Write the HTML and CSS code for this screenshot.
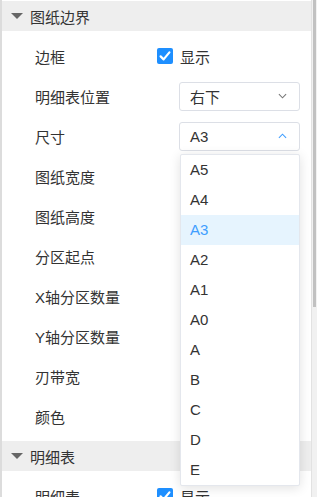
FILE: index.html
```html
<!DOCTYPE html>
<html lang="zh-CN">
<head>
  <meta charset="UTF-8" />
  <meta name="viewport" content="width=device-width, initial-scale=1.0"/>
  <title>图纸设置</title>
  <link rel="stylesheet" href="styles.css">
</head>
<body>
  <div class="page">
    <div class="panel">

      <!-- 图纸边界 -->
      <div class="section-head"><span class="caret"></span>图纸边界</div>
      <div class="section-body">
        <div class="row">
          <span class="label">边框</span>
          <label class="check"><span class="box"><svg viewBox="0 0 16 16" width="16" height="16"><path d="M3.6 8.4 L6.6 11.4 L12.4 4.4" fill="none" stroke="#fff" stroke-width="2.2" stroke-linecap="round" stroke-linejoin="round"/></svg></span>显示</label>
        </div>
        <div class="row">
          <span class="label">明细表位置</span>
          <div class="select">
            <span>右下</span>
            <svg class="arrow" viewBox="0 0 10 6" width="9" height="6"><path d="M1 1 L5 5 L9 1" fill="none" stroke="#777" stroke-width="1.2"/></svg>
          </div>
        </div>
        <div class="row">
          <span class="label">尺寸</span>
          <div class="select open">
            <span>A3</span>
            <svg class="arrow" viewBox="0 0 10 6" width="9" height="6"><path d="M1 5 L5 1 L9 5" fill="none" stroke="#409eff" stroke-width="1.2"/></svg>
            <ul class="dropdown">
              <li>A5</li>
              <li>A4</li>
              <li class="selected">A3</li>
              <li>A2</li>
              <li>A1</li>
              <li>A0</li>
              <li>A</li>
              <li>B</li>
              <li>C</li>
              <li>D</li>
              <li>E</li>
            </ul>
          </div>
        </div>
        <div class="row"><span class="label">图纸宽度</span></div>
        <div class="row"><span class="label">图纸高度</span></div>
        <div class="row"><span class="label">分区起点</span></div>
        <div class="row"><span class="label">X轴分区数量</span></div>
        <div class="row"><span class="label">Y轴分区数量</span></div>
        <div class="row"><span class="label">刃带宽</span></div>
        <div class="row"><span class="label">颜色</span></div>
      </div>

      <!-- 明细表 -->
      <div class="section-head"><span class="caret"></span>明细表</div>
      <div class="section-body">
        <div class="row">
          <span class="label">明细表</span>
          <label class="check"><span class="box"><svg viewBox="0 0 16 16" width="16" height="16"><path d="M3.6 8.4 L6.6 11.4 L12.4 4.4" fill="none" stroke="#fff" stroke-width="2.2" stroke-linecap="round" stroke-linejoin="round"/></svg></span>显示</label>
        </div>
      </div>

    </div>
    <div class="scrollbar"><div class="thumb"></div></div>
  </div>
</body>
</html>
```

FILE: styles.css
```css
html, body {
  margin: 0;
  height: 100%;
  overflow: hidden;
}
body {
  background-color: #fff;
  color: #333;
  font-family: "Liberation Sans", "Noto Sans CJK SC", sans-serif;
  font-size: 15px;
}
.page {
  display: flex;
  height: 497px;
}
.panel {
  flex: 1;
  border-left: 2px solid #dcdcdc;
  padding-top: 1px;
}
.section-head {
  height: 30px;
  display: flex;
  align-items: center;
  gap: 7px;
  padding-left: 9px;
  background-color: #eeeeee;
  color: #333;
}
.caret {
  width: 0;
  height: 0;
  border-left: 6px solid transparent;
  border-right: 6px solid transparent;
  border-top: 6px solid #666;
}
.section-body {
  padding: 5px 0;
}
.row {
  height: 40px;
  display: flex;
  align-items: center;
  padding-left: 33px;
}
.label {
  width: 122px;
  flex-shrink: 0;
}
.check {
  display: flex;
  align-items: center;
  gap: 7px;
}
.box {
  width: 16px;
  height: 16px;
  border-radius: 2px;
  background-color: #1e8fff;
  display: flex;
}
.select {
  position: relative;
  margin-left: 22px;
  height: 27px;
  border: 1px solid #dcdfe6;
  border-radius: 3px;
  display: flex;
  align-items: center;
  justify-content: space-between;
  padding: 0 12px 0 10px;
  width: 97px;
}
.dropdown {
  position: absolute;
  top: 31px;
  left: 0;
  width: 118px;
  margin: 0;
  padding: 0;
  list-style: none;
  background-color: #fff;
  border: 1px solid #e4e7ed;
  border-radius: 2px;
  box-shadow: 0 2px 12px rgba(0, 0, 0, 0.12);
  z-index: 5;
}
.dropdown li {
  height: 30px;
  line-height: 30px;
  padding-left: 9px;
  color: #333;
}
.dropdown li.selected {
  background-color: #e6f4fe;
  color: #409eff;
}
.scrollbar {
  width: 5px;
  background-color: #f1f1f1;
  border-left: 1px solid #e2e2e2;
}
.thumb {
  height: 307px;
  margin: 0 1px;
  background-color: #c1c1c1;
}
```
